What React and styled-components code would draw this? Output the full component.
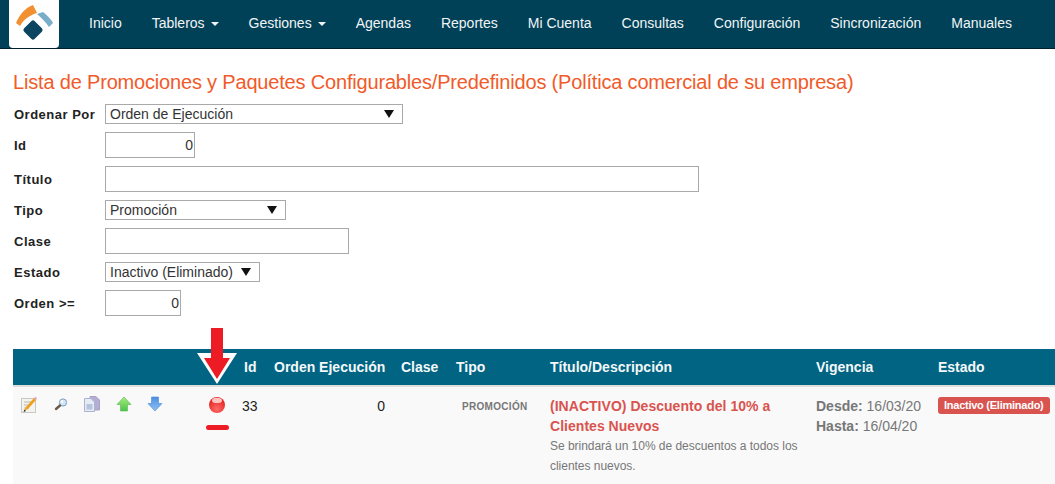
import React from "react";
import styled, { createGlobalStyle } from "styled-components";

const Global = createGlobalStyle`
  html, body { margin: 0; padding: 0; background: #fff; overflow: hidden; }
  body { font-family: "Liberation Sans", Arial, sans-serif; font-size: 14px; color: #333; }
`;

const Page = styled.div`
  position: relative;
  width: 1055px;
  height: 484px;
  overflow: hidden;
`;

const Navbar = styled.nav`
  display: flex;
  align-items: stretch;
  height: 48px;
  background: #004157;
  border-bottom: 1px solid #002030;
  padding-left: 9px;
`;

const LogoBox = styled.div`
  width: 50px;
  height: 48px;
  background: #fff;
  border-radius: 0 0 4px 4px;
  margin-right: 15px;
  flex: none;
`;

const NavItem = styled.a`
  display: flex;
  align-items: center;
  padding: 0 15px 2px;
  color: #f0f4f6;
  font-size: 14px;
  white-space: nowrap;
`;

const Caret = styled.span`
  display: inline-block;
  margin-left: 6px;
  margin-top: 2px;
  border-top: 4px solid #f0f4f6;
  border-left: 4px solid transparent;
  border-right: 4px solid transparent;
`;

const Title = styled.h1`
  margin: 0;
  padding: 21px 0 0 13px;
  height: 34px;
  line-height: 24px;
  font-size: 20px;
  font-weight: 400;
  letter-spacing: -0.18px;
  color: #f15a29;
  white-space: nowrap;
`;

const Form = styled.div`
  display: grid;
  grid-template-columns: 92px auto;
  justify-content: start;
  justify-items: start;
  align-items: center;
  row-gap: 8px;
  padding: 0 0 0 13px;
`;

const Label = styled.label`
  font-size: 13px;
  font-weight: 700;
  letter-spacing: 0.5px;
  color: #222;
  padding-left: 1px;
`;

const SelectBox = styled.div`
  box-sizing: border-box;
  display: flex;
  align-items: center;
  justify-content: space-between;
  width: ${(p) => p.$w}px;
  height: 20px;
  padding: 0 8px 0 4px;
  background: #fff;
  border: 1px solid #a9a9a9;
  font-size: 14px;
  color: #333;
`;

const SelectArrow = styled.span`
  width: 0;
  height: 0;
  border-top: 8px solid #111;
  border-left: 5px solid transparent;
  border-right: 5px solid transparent;
`;

const Input = styled.input`
  box-sizing: border-box;
  width: ${(p) => p.$w}px;
  height: 26px;
  padding: 0 1px;
  border: 1px solid #a9a9a9;
  border-radius: 0;
  outline: none;
  background: #fff;
  font: 14px "Liberation Sans", Arial, sans-serif;
  color: #333;
  text-align: ${(p) => (p.$num ? "right" : "left")};
`;

const Table = styled.div`
  margin: 33px 0 0 13px;
  height: 135px;
  display: flex;
  flex-direction: column;
`;

const Columns = `
  display: grid;
  grid-template-columns: 223px 30px 127px 55px 94px 266px 122px 125px;
`;

const HeadRow = styled.div`
  ${Columns}
  align-items: center;
  height: 36px;
  background: #006482;
  border-bottom: 2px solid #ddd;
  color: #f4f8fa;
  font-weight: 700;
  font-size: 14px;
`;

const HeadCell = styled.div`
  padding-left: 8px;
  white-space: nowrap;
`;

const BodyRow = styled.div`
  ${Columns}
  flex: 1;
  background: #f9f9f9;
  line-height: 20px;
`;

const Cell = styled.div`
  padding: 9px 8px 0;
  min-width: 0;
`;

const IdCell = styled(Cell)`
  padding-left: 6px;
  padding-right: 0;
  color: #222;
`;

const NumCell = styled(Cell)`
  text-align: right;
  color: #222;
`;

const TipoCell = styled(Cell)`
  padding-left: 14px;
  padding-right: 0;
  padding-top: 10px;
  font-size: 10px;
  font-weight: 700;
  letter-spacing: 0.3px;
  color: #777;
  white-space: nowrap;
`;

const Icons = styled.div`
  display: flex;
  gap: 15.5px;
  padding: 9px 0 0 8px;
  align-items: flex-start;
`;

const IconBox = styled.svg`
  display: block;
  flex: none;
  margin-left: ${(p) => p.$ml || 0}px;
`;

const PromoTitle = styled.div`
  font-weight: 700;
  font-size: 14px;
  letter-spacing: 0.03px;
  color: #d9534f;
`;

const PromoDesc = styled.div`
  font-size: 12px;
  letter-spacing: -0.03px;
  color: #777;
`;

const DateLine = styled.div`
  color: #777;
  font-size: 14px;
  white-space: nowrap;
`;

const Badge = styled.span`
  display: inline-block;
  padding: 0 6px;
  height: 17px;
  line-height: 17px;
  background: #d9534f;
  color: #fff;
  font-size: 11px;
  font-weight: 700;
  letter-spacing: -0.25px;
  border-radius: 3px;
  white-space: nowrap;
`;

const BadgeCell = styled(Cell)`
  padding-right: 0;
  line-height: 17px;
`;

const Annotation = styled.svg`
  position: absolute;
  left: 190px;
  top: 320px;
`;

const Logo = () => (
  <svg width="50" height="48" viewBox="0 0 50 48">
    <path d="M7 23 C11 14 16 8 24 5 L28 13 C21 15 15 19 11 26 Z" fill="#f28f30" />
    <path d="M28 14 L34 12 C38 15 42 19 44 23 L40 27 C37 23 33 18 28 14 Z" fill="#78aec8" />
    <rect x="16.5" y="22.5" width="15" height="15" rx="2.5" transform="rotate(45 24 30)" fill="#0b4560" />
  </svg>
);

const PencilIcon = () => (
  <IconBox width="16" height="18" viewBox="0 0 16 18">
    <rect x="0.5" y="2.5" width="14" height="14" fill="#f4f4ee" stroke="#c8c8c4" />
    <path d="M3 6h8M3 9h6M3 12h5" stroke="#b8b8b4" />
    <path d="M3 15 L5 11 L13 2 L15 4 L7 13 Z" fill="#f0a020" />
    <path d="M13 2 L14.5 0.8 L16 2.5 L15 4 Z" fill="#e8a0c8" />
    <path d="M2.5 16 L3.5 13.5 L5 15 Z" fill="#222" />
  </IconBox>
);

const KeyIcon = () => (
  <IconBox width="16" height="16" viewBox="0 0 16 16">
    <circle cx="10" cy="6.5" r="3.6" fill="#cfe6f8" stroke="#7d9cc0" />
    <circle cx="9" cy="5.5" r="1.3" fill="#fff" />
    <path d="M7 9.5 L3 13" stroke="#6a5a4a" strokeWidth="2.4" strokeLinecap="round" />
  </IconBox>
);

const CopyIcon = () => (
  <IconBox width="16" height="16" viewBox="0 0 16 16">
    <path d="M6 0.5 H12 L15.5 4 V14 H6 Z" fill="#b4aed4" stroke="#a8a2c8" />
    <path d="M0.5 2.5 H7 L10.5 6 V15.5 H0.5 Z" fill="#e6ebf5" stroke="#aab4ce" />
    <rect x="2.5" y="8" width="6" height="5.5" fill="#b6c4de" />
  </IconBox>
);

const UpIcon = () => (
  <IconBox width="16" height="16" viewBox="0 0 16 16">
    <defs>
      <linearGradient id="gUp" x1="0" y1="0" x2="0" y2="1">
        <stop offset="0" stopColor="#a6ee7c" />
        <stop offset="1" stopColor="#4cc24a" />
      </linearGradient>
    </defs>
    <path d="M8 1 L15 8.5 H11.5 V15 H4.5 V8.5 H1 Z" fill="url(#gUp)" stroke="#58b850" strokeWidth="0.6" />
  </IconBox>
);

const DownIcon = () => (
  <IconBox width="16" height="16" viewBox="0 0 16 16">
    <defs>
      <linearGradient id="gDown" x1="0" y1="0" x2="0" y2="1">
        <stop offset="0" stopColor="#4d8fe0" />
        <stop offset="1" stopColor="#8cc0f4" />
      </linearGradient>
    </defs>
    <path d="M4.5 1 H11.5 V7.5 H15 L8 15 L1 7.5 H4.5 Z" fill="url(#gDown)" stroke="#4a88d8" strokeWidth="0.6" />
  </IconBox>
);

const StatusIcon = () => (
  <IconBox $ml={30.5} width="16" height="18" viewBox="0 0 16 18">
    <defs>
      <radialGradient id="gRed" cx="0.5" cy="0.75" r="0.7">
        <stop offset="0" stopColor="#ff6a66" />
        <stop offset="1" stopColor="#e2201f" />
      </radialGradient>
    </defs>
    <circle cx="8" cy="9" r="8" fill="url(#gRed)" />
    <ellipse cx="8" cy="4.4" rx="5" ry="2.6" fill="#ffc4c0" />
  </IconBox>
);

const nav = [
  ["Inicio"], ["Tableros", true], ["Gestiones", true], ["Agendas"], ["Reportes"],
  ["Mi Cuenta"], ["Consultas"], ["Configuración"], ["Sincronización"], ["Manuales"],
];

const heads = ["", "Id", "Orden Ejecución", "Clase", "Tipo", "Título/Descripción", "Vigencia", "Estado"];

export default function App() {
  return (
    <Page>
      <Global />
      <Navbar>
        <LogoBox><Logo /></LogoBox>
        {nav.map(([t, c]) => (
          <NavItem key={t}>{t}{c && <Caret />}</NavItem>
        ))}
      </Navbar>
      <Title>Lista de Promociones y Paquetes Configurables/Predefinidos (Política comercial de su empresa)</Title>
      <Form>
        <Label>Ordenar Por</Label>
        <SelectBox $w={298}>Orden de Ejecución<SelectArrow /></SelectBox>
        <Label>Id</Label>
        <Input $w={90} $num readOnly value="0" />
        <Label>Título</Label>
        <Input $w={594} readOnly value="" />
        <Label>Tipo</Label>
        <SelectBox $w={181}>Promoción<SelectArrow /></SelectBox>
        <Label>Clase</Label>
        <Input $w={244} readOnly value="" />
        <Label>Estado</Label>
        <SelectBox $w={155}>Inactivo (Eliminado)<SelectArrow /></SelectBox>
        <Label>Orden &gt;=</Label>
        <Input $w={76} $num readOnly value="0" />
      </Form>
      <Table>
        <HeadRow>
          {heads.map((h, i) => <HeadCell key={i}>{h}</HeadCell>)}
        </HeadRow>
        <BodyRow>
          <Icons>
            <PencilIcon />
            <KeyIcon />
            <CopyIcon />
            <UpIcon />
            <DownIcon />
            <StatusIcon />
          </Icons>
          <IdCell>33</IdCell>
          <NumCell>0</NumCell>
          <Cell />
          <TipoCell>PROMOCIÓN</TipoCell>
          <Cell>
            <PromoTitle>(INACTIVO) Descuento del 10% a Clientes Nuevos</PromoTitle>
            <PromoDesc>Se brindará un 10% de descuentos a todos los clientes nuevos.</PromoDesc>
          </Cell>
          <Cell>
            <DateLine><b>Desde:</b> 16/03/20</DateLine>
            <DateLine><b>Hasta:</b> 16/04/20</DateLine>
          </Cell>
          <BadgeCell><Badge>Inactivo (Eliminado)</Badge></BadgeCell>
        </BodyRow>
      </Table>
      <Annotation width="50" height="115" viewBox="0 0 50 115">
        <path d="M21 8 H33 V33 H47 L27 64 L7 33 H21 Z" fill="#fff" />
        <path d="M21 8 H33 V38 H40 L27 59 L14 38 H21 Z" fill="#ed1c24" />
        <rect x="16" y="105" width="23" height="5" rx="2.5" fill="#ed1c24" />
      </Annotation>
    </Page>
  );
}
